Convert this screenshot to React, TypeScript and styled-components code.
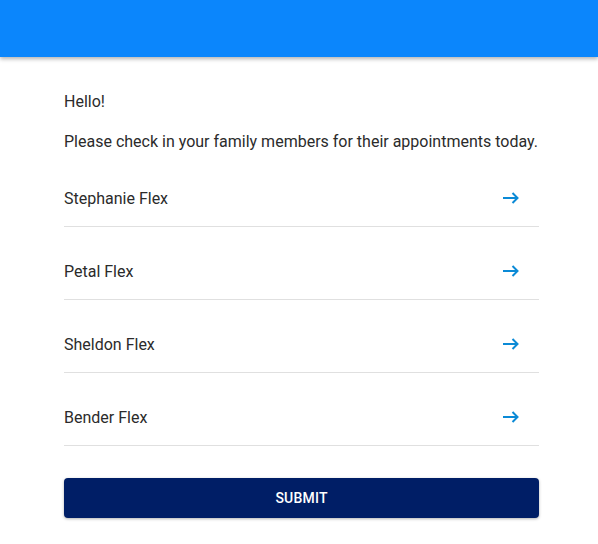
import React from "react";
import styled, { createGlobalStyle } from "styled-components";

const GlobalStyle = createGlobalStyle`
  body {
    margin: 0;
    background: #fff;
    font-family: Roboto, "Noto Sans", sans-serif;
    color: #2b2b2b;
  }
`;

const Header = styled.header`
  height: 57px;
  background: #0b86fc;
  box-shadow: 0 2px 4px rgba(0, 0, 0, 0.3);
`;

const Main = styled.main`
  width: 475px;
  padding: 33px 0 24px 64px;
`;

const Para = styled.p`
  margin: 0 0 16px;
  font-size: 16px;
  line-height: 24px;
`;

const List = styled.ul`
  list-style: none;
  margin: 0;
  padding: 0;
`;

const Row = styled.li`
  display: flex;
  align-items: center;
  justify-content: space-between;
  height: 56px;
  margin-top: 16px;
  border-bottom: 1px solid #e0e0e0;
  font-size: 16px;
  cursor: pointer;
`;

const Arrow = styled.svg`
  width: 16px;
  height: 12px;
  margin-right: 20px;
  fill: none;
  stroke: #0b8ad6;
  stroke-width: 2;
`;

const SubmitButton = styled.button`
  display: block;
  width: 100%;
  height: 40px;
  margin-top: 32px;
  border: none;
  border-radius: 4px;
  background: #001e66;
  color: #fff;
  font-family: Roboto, "Noto Sans", sans-serif;
  font-size: 14px;
  font-weight: 500;
  letter-spacing: 0.2px;
  text-transform: uppercase;
  box-shadow: 0 1px 3px rgba(0, 0, 0, 0.3);
  cursor: pointer;
`;

const members = ["Stephanie Flex", "Petal Flex", "Sheldon Flex", "Bender Flex"];

export default function App() {
  return (
    <>
      <GlobalStyle />
      <Header />
      <Main>
        <Para>Hello!</Para>
        <Para>Please check in your family members for their appointments today.</Para>
        <List>
          {members.map((name) => (
            <Row key={name}>
              <span>{name}</span>
              <Arrow viewBox="0 0 16 12">
                <path d="M0 6h14.5M9.5 1l5 5-5 5" />
              </Arrow>
            </Row>
          ))}
        </List>
        <SubmitButton>Submit</SubmitButton>
      </Main>
    </>
  );
}
